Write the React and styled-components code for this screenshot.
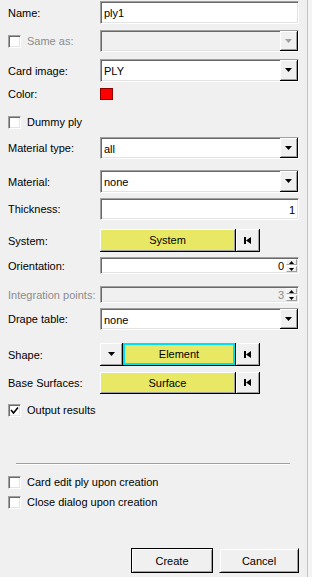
import styled, { createGlobalStyle } from "styled-components";

const GlobalStyle = createGlobalStyle`
  html, body {
    margin: 0;
    padding: 0;
    background: #f4f4f4;
  }
  body {
    font-family: "Liberation Sans", Arial, sans-serif;
    font-size: 11px;
    color: #000;
  }
`;

const Panel = styled.div`
  width: 308px;
  height: 577px;
  background: #f0f0f0;
  border-right: 1px solid #c4c4c4;
  box-sizing: border-box;
  display: flex;
  flex-direction: column;
  padding: 0 8px;
`;

const Row = styled.div`
  display: flex;
  align-items: center;
  height: ${(p) => p.$h || 22}px;
  margin-top: ${(p) => p.$mt || 0}px;
  flex-shrink: 0;
`;

const Label = styled.span`
  width: 92px;
  flex-shrink: 0;
  white-space: nowrap;
  color: ${(p) => (p.$disabled ? "#8c8c8c" : "#000")};
`;

const Sunken = styled.div`
  position: relative;
  box-sizing: border-box;
  width: ${(p) => p.$w || 200}px;
  height: 100%;
  background: ${(p) => (p.$disabled ? "#f0f0f0" : "#fff")};
  border-top: 1px solid #a0a0a0;
  border-left: 1px solid #a0a0a0;
  border-right: 1px solid #fff;
  border-bottom: 1px solid #fff;
  box-shadow: inset 1px 1px 0 #696969, inset -1px -1px 0 #e3e3e3;
  display: flex;
  align-items: center;
  padding: 1px 3px 0 3px;
  justify-content: ${(p) => (p.$right ? "flex-end" : "flex-start")};
  color: ${(p) => (p.$disabled ? "#8c8c8c" : "#000")};
`;

const ComboArrow = styled.div`
  position: absolute;
  right: 0;
  top: 0;
  bottom: 0;
  width: 18px;
  background: #f0f0f0;
  border-right: 1px solid #000;
  border-bottom: 1px solid #000;
  box-sizing: border-box;
  box-shadow: inset 1px 1px 0 #fff, inset -1px -1px 0 #a0a0a0;
  display: flex;
  align-items: center;
  justify-content: center;
  color: ${(p) => (p.$disabled ? "#a0a0a0" : "#000")};
`;

const Spinner = styled.div`
  position: absolute;
  right: 1px;
  top: 1px;
  bottom: 1px;
  width: 11px;
  display: flex;
  flex-direction: column;
  gap: 1px;
`;

const SpinHalf = styled.div`
  flex: 1;
  background: #f0f0f0;
  border: 1px solid #a0a0a0;
  border-top-color: #fff;
  border-left-color: #fff;
  display: flex;
  align-items: center;
  justify-content: center;
`;

const Swatch = styled.div`
  width: 13px;
  height: 12px;
  background: #ff0000;
  border: 1px solid #8a0000;
  box-sizing: border-box;
`;

const Box = styled.span`
  width: 13px;
  height: 13px;
  box-sizing: border-box;
  background: #fff;
  border-top: 1px solid #a0a0a0;
  border-left: 1px solid #a0a0a0;
  border-right: 1px solid #fff;
  border-bottom: 1px solid #fff;
  box-shadow: inset 1px 1px 0 #696969, inset -1px -1px 0 #e3e3e3;
  flex-shrink: 0;
  display: flex;
  align-items: center;
  justify-content: center;
`;

const CheckLabel = styled.span`
  margin-left: 6px;
  color: ${(p) => (p.$disabled ? "#8c8c8c" : "#000")};
`;

const CheckWrap = styled.div`
  display: flex;
  align-items: center;
  width: ${(p) => (p.$inline ? "92px" : "auto")};
  flex-shrink: 0;
`;

const Raised = styled.div`
  box-sizing: border-box;
  height: 100%;
  width: ${(p) => p.$w}px;
  background: ${(p) => (p.$yellow ? "#e8e864" : "#f0f0f0")};
  border-right: 1px solid #000;
  border-bottom: 1px solid #000;
  box-shadow: ${(p) =>
    p.$active
      ? "inset 0 0 0 2px #00e0e8"
      : "inset 1px 1px 0 #fff, inset -1px -1px 0 #a0a0a0"};
  display: flex;
  align-items: center;
  justify-content: center;
  flex-shrink: 0;
`;

const Separator = styled.div`
  height: 0;
  border-top: 1px solid #a0a0a0;
  border-bottom: 1px solid #fff;
  margin: 0 9px 0 8px;
`;

const Footer = styled.div`
  display: flex;
  justify-content: flex-end;
  gap: 6px;
  padding-right: 0;
  margin-right: 0;
`;

const Button = styled.div`
  box-sizing: border-box;
  width: ${(p) => p.$w}px;
  height: 25px;
  background: #f0f0f0;
  display: flex;
  align-items: center;
  justify-content: center;
  border: 1px solid ${(p) => (p.$default ? "#000" : "transparent")};
  border-right-color: #000;
  border-bottom-color: #000;
  box-shadow: inset 1px 1px 0 #fff, inset -1px -1px 0 #a0a0a0;
`;

const Arrow = ({ color = "currentColor" }) => (
  <svg width="7" height="4" viewBox="0 0 7 4">
    <polygon points="0,0 7,0 3.5,4" fill={color} />
  </svg>
);

const Tiny = ({ up }) => (
  <svg width="5" height="3" viewBox="0 0 5 3">
    <polygon points={up ? "0,3 5,3 2.5,0" : "0,0 5,0 2.5,3"} fill="#000" />
  </svg>
);

const FirstIcon = () => (
  <svg width="7" height="7" viewBox="0 0 7 7">
    <rect x="0" y="0" width="2" height="7" fill="#000" />
    <polygon points="7,0 7,7 2,3.5" fill="#000" />
  </svg>
);

const Check = () => (
  <svg width="9" height="9" viewBox="0 0 9 9">
    <polyline points="1,4 3.5,7 8,1.5" fill="none" stroke="#000" strokeWidth="1.6" />
  </svg>
);

function Combo({ value, disabled }) {
  return (
    <Sunken $disabled={disabled}>
      {value}
      <ComboArrow $disabled={disabled}>
        <Arrow />
      </ComboArrow>
    </Sunken>
  );
}

function Spin({ value, disabled }) {
  return (
    <Sunken $right $disabled={disabled} style={{ paddingRight: 14 }}>
      {value}
      <Spinner>
        <SpinHalf>
          <Tiny up />
        </SpinHalf>
        <SpinHalf>
          <Tiny />
        </SpinHalf>
      </Spinner>
    </Sunken>
  );
}

function CheckBox({ label, checked, disabled, inline }) {
  return (
    <CheckWrap $inline={inline}>
      <Box>{checked && <Check />}</Box>
      <CheckLabel $disabled={disabled}>{label}</CheckLabel>
    </CheckWrap>
  );
}

export default function App() {
  return (
    <>
      <GlobalStyle />
      <Panel>
        <Row $h={23} $mt={1}>
          <Label>Name:</Label>
          <Sunken>ply1</Sunken>
        </Row>
        <Row $h={22} $mt={6}>
          <CheckBox label="Same as:" disabled inline />
          <Combo disabled />
        </Row>
        <Row $h={23} $mt={7}>
          <Label>Card image:</Label>
          <Combo value="PLY" />
        </Row>
        <Row $h={16} $mt={4}>
          <Label>Color:</Label>
          <Swatch />
        </Row>
        <Row $h={16} $mt={12}>
          <CheckBox label="Dummy ply" />
        </Row>
        <Row $h={22} $mt={7}>
          <Label>Material type:</Label>
          <Combo value="all" />
        </Row>
        <Row $h={23} $mt={11}>
          <Label>Material:</Label>
          <Combo value="none" />
        </Row>
        <Row $h={22} $mt={5}>
          <Label>Thickness:</Label>
          <Sunken $right>1</Sunken>
        </Row>
        <Row $h={23} $mt={9}>
          <Label>System:</Label>
          <Raised $yellow $w={136}>System</Raised>
          <Raised $w={24}>
            <FirstIcon />
          </Raised>
        </Row>
        <Row $h={17} $mt={5}>
          <Label>Orientation:</Label>
          <Spin value="0" />
        </Row>
        <Row $h={17} $mt={12}>
          <Label $disabled>Integration points:</Label>
          <Spin value="3" disabled />
        </Row>
        <Row $h={22} $mt={5}>
          <Label>Drape table:</Label>
          <Combo value="none" />
        </Row>
        <Row $h={23} $mt={13}>
          <Label>Shape:</Label>
          <Raised $w={23}>
            <Arrow />
          </Raised>
          <Raised $yellow $active $w={113}>Element</Raised>
          <Raised $w={24}>
            <FirstIcon />
          </Raised>
        </Row>
        <Row $h={22} $mt={6}>
          <Label>Base Surfaces:</Label>
          <Raised $yellow $w={136}>Surface</Raised>
          <Raised $w={24}>
            <FirstIcon />
          </Raised>
        </Row>
        <Row $h={16} $mt={8}>
          <CheckBox label="Output results" checked />
        </Row>
        <Row $h={2} $mt={45}>
          <div style={{ flex: 1 }}>
            <Separator />
          </div>
        </Row>
        <Row $h={16} $mt={9}>
          <CheckBox label="Card edit ply upon creation" />
        </Row>
        <Row $h={16} $mt={4}>
          <CheckBox label="Close dialog upon creation" />
        </Row>
        <Row $h={25} $mt={38}>
          <div style={{ flex: 1 }}>
            <Footer>
              <Button $default $w={82}>Create</Button>
              <Button $w={80}>Cancel</Button>
            </Footer>
          </div>
        </Row>
      </Panel>
    </>
  );
}
